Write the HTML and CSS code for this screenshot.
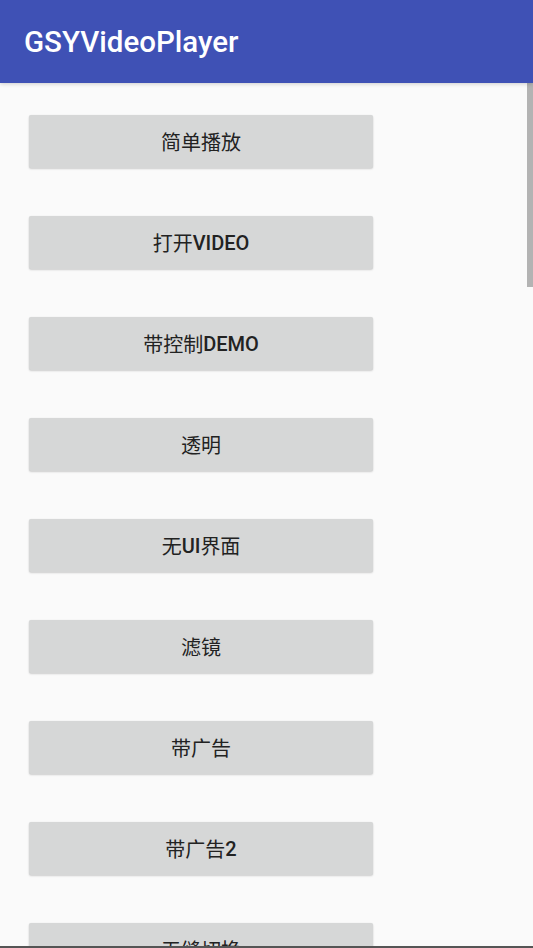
FILE: index.html
```html
<!DOCTYPE html>
<html>
<head>
<meta charset="utf-8">
<link rel="stylesheet" href="styles.css">
</head>
<body>
<div class="screen">
  <header class="appbar"><span class="title">GSYVideoPlayer</span></header>
  <main class="list">
    <div class="btn">简单播放</div>
    <div class="btn">打开<span class="latin">VIDEO</span></div>
    <div class="btn">带控制<span class="latin">DEMO</span></div>
    <div class="btn">透明</div>
    <div class="btn">无<span class="latin">UI</span>界面</div>
    <div class="btn">滤镜</div>
    <div class="btn">带广告</div>
    <div class="btn">带广告<span class="latin">2</span></div>
    <div class="btn">无缝切换</div>
  </main>
  <div class="scrollbar"></div>
  <div class="bottomline"></div>
</div>
</body>
</html>
```
FILE: styles.css
```css
html, body {
  margin: 0;
  padding: 0;
  background: #fafafa;
}
.screen {
  position: relative;
  width: 533px;
  height: 948px;
  overflow: hidden;
  background: #fafafa;
  font-family: Roboto, "Noto Sans CJK SC", sans-serif;
}
.appbar {
  position: relative;
  z-index: 2;
  height: 83px;
  background: #3f51b5;
  display: flex;
  align-items: center;
  padding-left: 24px;
  box-shadow: 0 1px 4px rgba(0,0,0,0.18);
}
.title {
  color: #ffffff;
  font-family: Roboto, sans-serif;
  font-weight: 500;
  font-size: 29.5px;
  margin-top: 1px;
}
.list {
  display: flex;
  flex-direction: column;
  gap: 48px;
  padding: 32px 0 0 29px;
}
.btn {
  flex: none;
  width: 344px;
  height: 53px;
  background: #d6d7d7;
  border-radius: 2px;
  box-shadow: 0 1px 2px rgba(0,0,0,0.18), 0 0 1px rgba(0,0,0,0.08);
  display: flex;
  align-items: center;
  justify-content: center;
  font-family: "Noto Sans CJK SC", sans-serif;
  font-size: 20px;
  color: #222222;
}
.latin {
  font-family: Roboto, sans-serif;
  font-weight: 500;
  font-size: 20px;
}
.scrollbar {
  position: absolute;
  right: 0;
  top: 83px;
  width: 6px;
  height: 204px;
  background: #b3b3b3;
}
.bottomline {
  position: absolute;
  left: 0;
  right: 0;
  bottom: 0;
  height: 2px;
  background: #555555;
}
```
